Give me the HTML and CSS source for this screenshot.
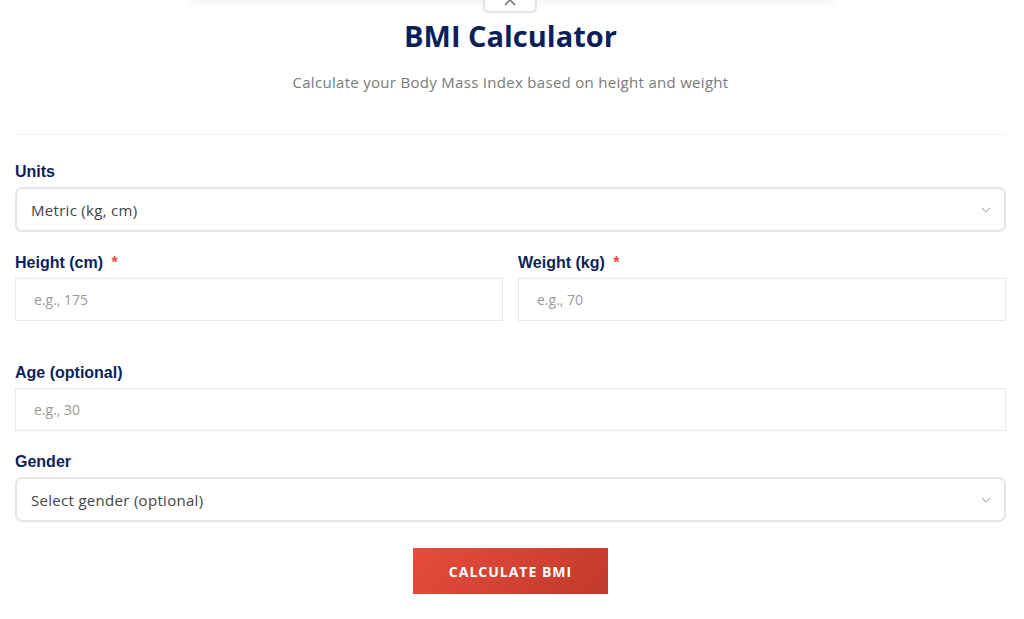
FILE: index.html
```html
<!DOCTYPE html>
<html lang="en">
<head>
    <meta charset="UTF-8">
    <meta name="viewport" content="width=device-width, initial-scale=1.0">
    <title>BMI Calculator</title>
    <link rel="stylesheet" href="styles.css">
</head>
<body>
    <!-- Top edge of the sheet above, with its close tab -->
    <div class="sheet-edge"></div>
    <div class="close-tab">
        <button class="close-btn" aria-label="Close">
            <svg width="14" height="14" viewBox="0 0 14 14"><path d="M2 2 L12 12 M12 2 L2 12" stroke="#666" stroke-width="1.4" fill="none"/></svg>
        </button>
    </div>

    <main class="bmi-wrap">
        <div class="bmi-header">
            <h2>BMI Calculator</h2>
            <p>Calculate your Body Mass Index based on height and weight</p>
        </div>

        <form class="bmi-form" id="bmi-form">
            <div class="field">
                <label for="units">Units</label>
                <div class="select-box">
                    <select id="units" name="units">
                        <option value="metric">Metric (kg, cm)</option>
                        <option value="imperial">Imperial (lb, in)</option>
                    </select>
                    <svg class="chevron" width="10" height="6" viewBox="0 0 10 6"><path d="M1 1 L5 5 L9 1" stroke="#bbb" stroke-width="1.2" fill="none"/></svg>
                </div>
            </div>

            <div class="field-row">
                <div class="field">
                    <label for="height">Height (cm) <span class="req">*</span></label>
                    <input type="number" id="height" name="height" placeholder="e.g., 175">
                </div>
                <div class="field">
                    <label for="weight">Weight (kg) <span class="req">*</span></label>
                    <input type="number" id="weight" name="weight" placeholder="e.g., 70">
                </div>
            </div>

            <div class="field field-age">
                <label for="age">Age (optional)</label>
                <input type="number" id="age" name="age" placeholder="e.g., 30">
            </div>

            <div class="field">
                <label for="gender">Gender</label>
                <div class="select-box">
                    <select id="gender" name="gender">
                        <option value="">Select gender (optional)</option>
                        <option value="male">Male</option>
                        <option value="female">Female</option>
                    </select>
                    <svg class="chevron" width="10" height="6" viewBox="0 0 10 6"><path d="M1 1 L5 5 L9 1" stroke="#bbb" stroke-width="1.2" fill="none"/></svg>
                </div>
            </div>

            <div class="actions">
                <button type="submit" class="calc-btn">Calculate BMI</button>
            </div>
        </form>
    </main>
</body>
</html>
```

FILE: styles.css
```css
/* Page */
body {
    margin: 0;
    background: #fff;
    font-family: "Open Sans", sans-serif;
    overflow: hidden;
}

/* Sheet edge and close tab */
.sheet-edge {
    width: 640px;
    height: 0;
    margin: 0 auto;
    box-shadow: 0 1px 6px 2px rgba(0, 0, 0, 0.08);
}

.close-tab {
    display: flex;
    justify-content: center;
    height: 13px;
    padding-right: 5px;
}

.close-btn {
    width: 54px;
    height: 26px;
    margin-top: -13px;
    background: #fff;
    border: 2px solid #e4e4e4;
    border-radius: 5px;
    display: flex;
    align-items: flex-start;
    justify-content: center;
    padding: 0;
}

.close-btn svg {
    margin-top: 4px;
}

/* Header */
.bmi-wrap {
    padding: 0 18px 0 15px;
}

.bmi-header {
    text-align: center;
    border-bottom: 1px solid #f1f1f1;
    padding-bottom: 42px;
}

.bmi-header h2 {
    margin: 5px 0 0;
    font-size: 29px;
    font-weight: 700;
    color: #0b1f5b;
    line-height: 36px;
}

.bmi-header p {
    margin: 18px 0 0;
    font-size: 15px;
    letter-spacing: 0.3px;
    color: #7a7a7a;
    line-height: 20px;
}

/* Form */
.bmi-form {
    padding-top: 28px;
}

.field label {
    display: block;
    font-family: "Liberation Sans", Arial, sans-serif;
    font-weight: 700;
    font-size: 16px;
    color: #0b1f5b;
    line-height: 18px;
    margin-bottom: 6px;
}

.req {
    color: #e74c3c;
    margin-left: 4px;
}

.field input {
    display: block;
    width: 100%;
    height: 43px;
    box-sizing: border-box;
    border: 1px solid #e9e9e9;
    border-radius: 0;
    padding: 0 18px;
    font-family: "Open Sans", sans-serif;
    font-size: 14px;
    color: #333;
}

.field input::placeholder {
    color: #9a9a9a;
}

.select-box {
    position: relative;
}

.select-box select {
    display: block;
    width: 100%;
    height: 45px;
    box-sizing: border-box;
    border: 2px solid #e3e5e8;
    border-radius: 7px;
    padding: 0 14px;
    background: #fff;
    appearance: none;
    font-family: "Open Sans", sans-serif;
    font-size: 15px;
    letter-spacing: 0.3px;
    color: #444;
}

.chevron {
    position: absolute;
    right: 15px;
    top: 20px;
}

.field-row {
    display: grid;
    grid-template-columns: 1fr 1fr;
    gap: 15px;
    margin-top: 22px;
}

.field-age {
    margin-top: 43px;
}

.field-age + .field {
    margin-top: 22px;
}

/* Button */
.actions {
    display: flex;
    justify-content: center;
    margin-top: 26px;
}

.calc-btn {
    width: 195px;
    height: 46px;
    border: none;
    background: linear-gradient(135deg, #e74c3c, #c0392b);
    color: #fff;
    font-family: "Open Sans", sans-serif;
    font-weight: 700;
    font-size: 14px;
    letter-spacing: 1px;
    text-transform: uppercase;
    cursor: pointer;
}
```
